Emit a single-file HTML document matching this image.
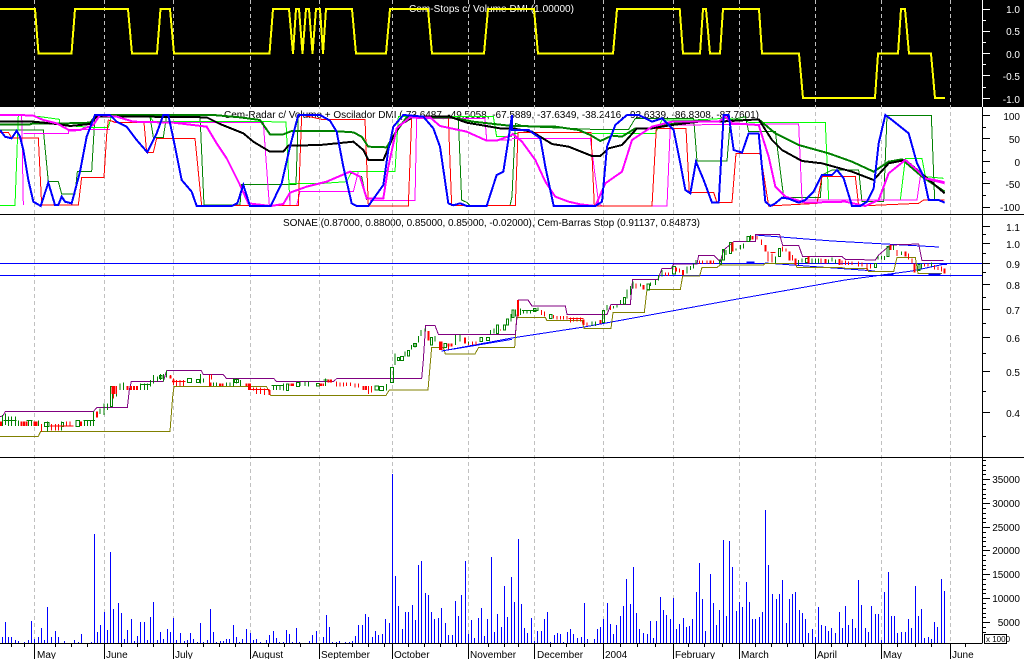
<!DOCTYPE html>
<html><head><meta charset="utf-8"><style>
html,body{margin:0;padding:0;background:#fff;overflow:hidden}
svg{display:block}
text{font-family:"Liberation Sans",sans-serif;font-size:10px}
.l{fill:none;stroke-linejoin:miter;shape-rendering:crispEdges}
</style></head><body>
<svg width="1024" height="659" viewBox="0 0 1024 659" xmlns="http://www.w3.org/2000/svg">
<rect width="1024" height="659" fill="#fff"/>
<rect width="1024" height="107" fill="#000"/>
<text x="409" y="12" fill="#fff" textLength="165" lengthAdjust="spacing">Cem-Stops c/ Volume DMI (1.00000)</text>
<text x="224" y="118" fill="#000" textLength="535" lengthAdjust="spacing">Cem-Radar c/ Volume + Oscilador DMI (-73.6487, -49.5058, -67.5889, -37.6349, -38.2416, -92.6339, -86.8308, -87.7601)</text>
<text x="283" y="226" fill="#000" textLength="417" lengthAdjust="spacing">SONAE (0.87000, 0.88000, 0.85000, 0.85000, -0.02000), Cem-Barras Stop (0.91137, 0.84873)</text>
<path class="l" stroke="#c0c0c0" stroke-dasharray="4 3" d="M34.5 0V643M104.5 0V643M173.5 0V643M250.5 0V643M319.5 0V643M392.5 0V643M468.5 0V643M534.5 0V643M603.5 0V643M673.5 0V643M739.5 0V643M815.5 0V643M881.5 0V643M950.5 0V643"/>
<path class="l" stroke="#000" d="M0 214.5H1024M0 457.5H1024"/>
<path class="l" stroke="#ffff00" stroke-width="2" d="M0 9H35L38.5 53.7H71.5L75 9H128L132 53.7H157L160.5 9H170L174 53.7H269.5L273 9H289L293 53.7L296 9H299L302.5 53.7L306 9H309L312.5 53.7L316 9H320L323 53.7L326 9H352L356 53.7H386L390 9H428L432 53.7H484L488 9H534L538 53.7H613L617 9H679.7L683 53.7H700L703 9H706L710 53.7H720L723 9H759L762 53.7H799L803 98H875L878 53.7H898L901 9H905L909 53.7H931L935 98H945"/>

<g transform="translate(0,0) scale(.33333)">
<g class="l" stroke-width="3">
<path stroke="#008000" d="M0 390H130L145 545H175L185 582H225L232 515H275L285 345H355L450 350L460 412H490L500 345H600L612 615H720L725 553H888L895 345M1050 520H1055L1085 530L1100 600M1375 355L1385 600L1400 607L1410 617H1530L1536 590"/>
<path stroke="#00ff00" d="M0 617H45L55 345L120 350L178 358V375L270 382H325L335 345L450 350L460 365H780H800L858 366L870 617M868 550H970L1040 545L1055 515H1185L1195 350H1480L1490 410H1536"/>
<path stroke="#ff00ff" d="M0 345H65L70 615M70 400H205V388H330M340 368H790L808 615M870 575V617H890L900 575H1060L1075 515M1110 601H1245L1250 355H1455L1460 420H1536"/>
<path stroke="#ff0000" d="M0 397H25L35 414H115L125 615H235L245 532H312L320 405L325 360L350 368H432L440 457H460L470 415H585L605 617H895L905 345L965 358H1095L1105 618H1225L1235 352H1345L1355 617H1536"/>
</g>
<g class="l" stroke-width="6">
<path stroke="#008000" d="M0 373H90L100 370H200L270 368L290 345H640L720 352L780 360L810 403H850L875 393H1000L1060 397L1085 410L1105 440L1160 442L1185 400L1220 352H1350L1420 365L1536 378"/>
<path stroke="#000" d="M0 365H100L170 372L210 378L270 372L290 350H440L620 352L660 372L730 400L760 425L810 455H850L865 437L960 435L1030 428L1060 425L1090 450L1105 480H1150L1175 420L1200 375L1240 350H1350L1400 368L1500 385H1536"/>
<path stroke="#ff00ff" d="M0 345H60L100 347L130 360L170 370L210 392L240 390L280 375L300 345L350 350L400 365L520 368L620 380L650 430L680 475L720 555L745 610L812 618L850 612L870 578L920 560L980 545L1050 515L1080 530L1100 595H1150L1165 500L1190 385L1230 352H1290L1320 378L1400 395L1460 422H1490L1536 405"/>
<path stroke="#0000ff" d="M0 390L15 410L35 415L50 392L60 410L70 450L85 540L100 605L122 618L145 548L165 615H175L185 590L195 605L215 610L240 515L260 410L285 345H330L350 365L380 380L410 420L442 457L470 400L490 345H505L525 440L545 540L575 575L590 618H695L712 610L730 555L750 618H812L845 550L870 440L895 345H960L990 362L1010 395L1030 500L1055 610L1070 618H1105L1150 555L1165 450L1180 380L1210 345L1270 350L1300 385L1320 440L1345 610L1360 616L1380 610L1400 618H1460L1490 525L1510 515L1525 420L1536 345"/>
</g>
</g>

<g transform="translate(512,0) scale(.33333)">
<g class="l" stroke-width="3">
<path stroke="#00ff00" d="M0 400H20M240 400H430L450 360H545L640 355L700 360L710 367H940L950 600H1165L1180 475H1230L1240 530L1295 535"/>
<path stroke="#008000" d="M0 590L10 370L40 380L240 388H350L370 355H545L555 483H645L655 360L700 350L710 395H790L815 592H925L930 525L960 510H1040L1050 605H1115L1125 346H1258L1268 600"/>
<path stroke="#ff00ff" d="M0 415H235L260 610L270 618H465L475 375L860 372L870 600H1215L1225 530L1298 545"/>
<path stroke="#ff0000" d="M0 617H10L18 398H237L247 618H420L433 385H522L532 577H605L615 608H660L672 460H745L770 618L915 610L930 530H1030L1040 618L1220 610L1235 600H1298"/>
</g>
<g class="l" stroke-width="6">
<path stroke="#008000" d="M0 378L130 380L200 390L235 405L265 423L300 407L330 410L370 385H420L480 372L560 362L620 365L740 358L790 400L860 435L950 460L1020 485L1085 515L1130 485L1170 478L1230 530L1298 575"/>
<path stroke="#000" d="M0 385L60 395L120 432L170 440L240 468H265L290 445L330 435L375 385H420L480 375L560 365H620L740 358L780 420L810 450L870 483L930 490L1020 515L1085 540L1130 490L1180 480L1240 530L1298 580"/>
<path stroke="#ff00ff" d="M0 400L30 425L70 480L100 545L130 590L170 605L205 613L250 618L280 550L330 515L360 420L420 380L480 365H620L640 350L660 370L740 375L770 470L790 560L820 590L880 608L1000 605L1060 618L1100 600L1130 520L1180 480L1215 510L1240 535L1298 550"/>
<path stroke="#0000ff" d="M0 345V390H50L85 415L100 500L125 618H250L270 605L285 440L310 375L345 345H380L420 365L450 355L485 390L505 490L520 570L535 580L552 485L575 540L600 608H620L635 345H650L665 450L690 458L710 400H740L760 605L775 618L790 610L810 593L830 596L860 608L880 600L905 575L930 525H960L975 510L995 535L1020 618H1045L1065 605L1085 565L1100 430L1120 345L1140 360L1190 400L1215 490L1235 530L1250 600H1280L1298 608"/>
</g>
</g>

<g class="l" stroke="#0000ff">
<path d="M0 263.5H982M0 275.5H982"/>
<path d="M442 351L512 338L584 327L732 300L845 280L912 271L945 264"/>
<path d="M755 235L832 241L939 247"/>
<path d="M765 263L875 271"/>
</g>

<g transform="translate(0,300) scale(.33333)" class="l">
<path stroke="#808000" stroke-width="3" d="M0 409H115L122 394H510L518 290L522 260H800L812 286H1158L1168 270H1284L1290 200L1295 142H1330L1336 162H1425L1436 142H1536"/>
<path stroke="#800080" stroke-width="3" d="M0 350L8 348L16 335H280L290 323H382L388 270L394 244H490L500 212H604L610 224H670L680 236H822L830 245H1000L1010 236H1265L1270 180L1277 76H1305L1315 103H1536"/>
<path stroke="#008000" stroke-width="3" d="M7 345V378M16 340V375M25 350V378M34 350V378M46 350V378M55 362V378M10 362H50M85 362V378M94 362V378M80 362H98M115 362V378M142 365V395M184 365V392M253 362V378M262 362V378M271 362V378M280 335V378M250 362H285M300 325V342M312 310V345M322 310V330M350 262V290M360 250V270M370 248V270M422 250V270M433 250V270M442 250V270M420 254H450M451 240V260M460 225V250M472 230V245M481 222V240M478 226H486V236H478ZM490 222V245M500 212V232M601 222V250M610 235V248M640 247V258M650 247V258M680 247V258M690 247V258M700 235V260M710 235V250M704 238H716V247H704ZM722 240V258M820 255V270M830 255V270M840 255V270M850 250V272M815 257H850M900 245V258M915 245V258M925 245V260M976 235V258M970 240H982M1160 252V272M1185 160V195M1215 155V170M1235 135V148M1245 130V142M1255 108V128M1263 90V108M1275 85V95M1305 108V125M1367 105V135M1380 103V125M1405 125V135M1472 90V103M1482 85V100M1533 42V65"/>
<path stroke="#008000" stroke-width="3" d="M133 367H147V380H133ZM184 367H190V380H184ZM228 362H238V379H228ZM331 260H337V320H331ZM563 236H575V248H563ZM590 238H598V248H590ZM860 252H866V272H860ZM890 248H898V260H890ZM950 250H958V258H950ZM1125 258H1135V270H1125ZM1138 260H1150V272H1138ZM1172 202H1180V248H1172ZM1192 172H1198V182H1192ZM1202 170H1210V182H1202ZM1222 152H1228V168H1222ZM1240 130H1250V140H1240ZM1292 112H1298V135H1292ZM1332 130H1340V143H1332ZM1440 112H1448V125H1440ZM1460 112H1468V122H1460ZM1490 75H1496V100H1490ZM1510 75H1516V90H1510ZM1520 57H1526V75H1520Z"/>
<path stroke="#ff0000" stroke-width="3" d="M124 372V395M154 372V392M166 372V392M175 372V392M150 378H220M200 365V378M210 365V378M340 258V295M350 258V282M511 225V236M520 236V255M530 240V258M540 240V258M550 240V258M516 245H556M628 225V260M634 224V238M660 250V258M745 250V270M760 262V272M770 262V282M782 262V282M793 265V285M750 268H808M870 250V258M880 250V258M960 250V258M970 250V258M985 238V248M995 240V248M1010 245V260M1020 248V260M1030 248V260M1040 248V258M1052 248V258M1065 250V262M1075 250V262M1105 258V282M1115 258V278M1345 130V150M1355 130V140M1405 130V135M1418 125V135M1428 125V135M1502 88V92"/>
<path stroke="#ff0000" stroke-width="6" d="M3 365V378M64 364V378M72 364V378M80 364V378M103 364V378M110 364V378M243 364V378M291 335V352M337 258V282M344 258V282M383 258V270M393 258V270M402 258V270M411 258V270M511 226V236M520 238V248M631 248V258M660 250V258M668 250V258M740 250V258M750 250V270M808 270V285M876 250V258M965 250V258M985 238V248M993 238V248M1090 258V270M1098 258V270M1285 93V122M1320 124V150M1325 124V150M1345 130V140M1355 130V140M1395 113V130"/>
<path stroke="#0000ff" stroke-width="3" d="M1325 153L1536 118"/>
</g>

<g transform="translate(512,220) scale(.33333)" class="l">
<path stroke="#808000" stroke-width="3" d="M0 382H8L14 292H100L105 302H210L216 325H297L303 277H397L405 208H505L512 168H563L570 142H615L625 135H755L760 130H850L855 143H990L1000 145H1065L1070 155H1145L1155 112H1210L1218 160H1290"/>
<path stroke="#800080" stroke-width="3" d="M0 343H10L20 240H48L60 258H160L165 283H285L297 253H355L362 178H438L450 145H478L485 132H555L560 106H605L625 125L635 90L665 65H730V44H803L812 76H860L872 110H990L1000 118L1090 120L1100 105L1135 75L1220 72L1230 122H1295"/>
<path stroke="#008000" stroke-width="3" d="M10 268V290M25 265V285M35 270V280M45 270V280M55 270V280M30 272H80M78 262V270M240 305V318M250 305V318M285 255V272M305 258V265M315 255V262M325 240V252M345 208V235M355 198V225M363 185V205M385 190V200M415 188V198M430 180V195M440 165V182M450 150V170M525 140V160M535 138V150M545 130V145M552 120V132M642 90V105M672 85V92M685 75V88M695 70V85M715 45V62M790 110V130M860 120V135M870 115V128M900 115V130M910 115V130M920 115V130M950 118V130M960 112V125M970 118V130M1098 108V118M1108 108V118M1118 108V120M1145 75V90M1168 95V105M1228 130V145M1258 127V140"/>
<path stroke="#008000" stroke-width="3" d="M0 270H6V292H0ZM65 265H72V275H65ZM112 283H120V295H112ZM272 272H278V308H272ZM335 232H340V252H335ZM405 192H412V210H405ZM482 140H490V162H482ZM622 120H628V132H622ZM632 88H638V120H632ZM652 68H658V100H652ZM705 50H712V65H705ZM800 85H806V110H800ZM880 115H888V128H880ZM1088 130H1094V142H1088ZM1125 80H1131V110H1125ZM1218 133H1224V152H1218Z"/>
<path stroke="#ff0000" stroke-width="3" d="M88 270V285M97 275V290M125 285V295M135 288V298M145 288V298M155 288V298M165 288V298M175 292V308M185 292V305M195 292V305M205 292V305M170 296H215M225 308V318M295 258V270M372 190V205M460 158V168M470 158V168M503 145V158M562 122V132M572 122V132M585 122V132M605 122V132M735 48V58M748 58V75M768 95V125M780 100V128M776 98H790M812 80V95M822 85V95M842 105V122M927 115V130M990 122V135M1000 122V135M1010 125V135M1020 125V135M1040 125V140M1050 128V140M1065 130V152M1075 132V145M1155 90V108M1190 100V118M1200 115V130M1238 130V140M1248 130V140M1268 135V148M1278 140V150M1288 140V155"/>
<path stroke="#ff0000" stroke-width="6" d="M18 240V290M215 298V315M265 300V310M395 195V208M492 142V155M513 150V165M595 122V132M662 68V95M722 48V58M760 75V95M832 95V122M850 115V135M890 110V130M940 117V130M982 117V135M1135 75V90M1180 95V110M1208 130V158M1298 145V160"/>
<path stroke="#0000ff" stroke-width="6" d="M703 128H727M1115 165H1145M1250 163H1285M1285 132H1305"/>
</g>

<g transform="translate(0,460) scale(.33333)" class="l">
<path stroke="#0000ff" stroke-width="3" d="M7 531V550M16 486V550M25 531V550M34 531V550M46 540V550M55 543V550M73 546V550M85 540V550M94 483V550M103 537V550M115 531V550M124 504V550M133 540V550M142 441V550M154 531V550M166 513V550M175 531V550M193 543V550M223 540V550M235 546V550M244 522V550M274 546V550M283 222V550M292 516V550M301 495V550M313 456V550M322 510V550M331 276V550M340 447V550M355 429V550M364 459V550M373 537V550M382 510V550M394 477V550M403 543V550M412 528V550M421 486V550M433 486V550M442 540V550M451 471V550M460 426V550M472 540V550M481 516V550M490 537V550M502 507V550M511 516V550M520 474V550M529 540V550M541 519V550M553 543V550M562 540V550M571 519V550M580 537V550M592 546V550M601 489V550M610 546V550M622 540V550M631 447V550M640 516V550M649 546V550M661 543V550M670 543V550M679 537V550M688 537V550M700 495V550M709 531V550M718 546V550M727 537V550M739 507V550M751 519V550M760 540V550M769 537V550M781 546V550M799 540V550M808 525V550M820 513V550M829 534V550M838 546V550M850 546V550M859 510V550M868 522V550M877 546V550M889 504V550M898 546V550M928 543V550M937 525V550M949 513V550M970 531V550M979 465V550M988 501V550M997 546V550M1009 546V550M1018 543V550M1036 546V550M1048 546V550M1057 543V550M1066 528V550M1075 495V550M1087 495V550M1096 462V550M1105 471V550M1117 531V550M1126 513V550M1135 525V550M1147 522V550M1156 477V550M1168 489V550M1177 42V550M1186 348V550M1195 438V550M1207 507V550M1216 456V550M1225 456V550M1237 435V550M1246 480V550M1255 315V550M1264 303V550M1276 399V550M1285 405V550M1294 456V550M1303 477V550M1315 474V550M1324 444V550M1336 489V550M1345 525V550M1357 525V550M1366 423V550M1375 468V550M1384 405V550M1396 303V550M1405 522V550M1414 480V550M1423 534V550M1435 474V550M1444 444V550M1453 528V550M1462 477V550M1474 291V550M1483 516V550M1492 462V550M1504 501V550M1513 378V550M1522 471V550M1534 351V550"/>
</g>
<g transform="translate(512,460) scale(.33333)" class="l">
<path stroke="#0000ff" stroke-width="3" d="M7 426V550M19 237V550M28 432V550M37 504V550M46 519V550M58 474V550M67 543V550M76 513V550M88 513V550M97 477V550M106 456V550M115 546V550M127 525V550M136 519V550M145 522V550M154 546V550M166 516V550M175 507V550M184 522V550M196 534V550M208 531V550M217 429V550M226 537V550M247 537V550M256 507V550M265 501V550M274 477V550M286 429V550M295 492V550M304 522V550M313 495V550M325 468V550M334 438V550M343 357V550M355 432V550M364 321V550M373 459V550M382 507V550M394 519V550M406 522V550M415 483V550M424 534V550M433 483V550M445 411V550M454 450V550M463 465V550M475 477V550M484 414V550M493 507V550M502 492V550M514 474V550M523 501V550M532 498V550M541 477V550M553 396V550M562 309V550M571 417V550M580 513V550M595 342V550M604 429V550M613 495V550M622 450V550M634 240V550M643 468V550M652 243V550M661 321V550M673 453V550M682 426V550M691 441V550M703 366V550M712 426V550M721 477V550M730 477V550M742 471V550M751 456V550M760 150V550M769 315V550M781 402V550M793 417V550M802 402V550M811 360V550M823 489V550M832 417V550M841 402V550M850 396V550M862 450V550M871 459V550M880 477V550M889 519V550M901 507V550M910 531V550M919 441V550M928 495V550M940 498V550M949 513V550M958 504V550M970 519V550M982 456V550M991 504V550M1000 438V550M1009 495V550M1021 477V550M1030 504V550M1039 360V550M1048 435V550M1060 504V550M1069 516V550M1078 438V550M1090 462V550M1099 462V550M1108 540V550M1117 396V550M1129 336V550M1138 468V550M1147 468V550M1156 519V550M1168 516V550M1180 516V550M1189 477V550M1198 504V550M1210 378V550M1219 468V550M1228 447V550M1237 534V550M1249 531V550M1258 537V550M1267 486V550M1276 501V550M1288 357V550M1297 393V550"/>
</g>

<path class="l" stroke="#000" d="M0 643.5H982.5M34.5 643V659M104.5 643V659M173.5 643V659M250.5 643V659M319.5 643V659M392.5 643V659M468.5 643V659M534.5 643V659M603.5 643V659M673.5 643V659M739.5 643V659M815.5 643V659M881.5 643V659M950.5 643V659M11.5 643V647M24.5 643V647M55.5 643V647M71.5 643V647M87.5 643V647M121.5 643V647M137.5 643V647M153.5 643V647M187.5 643V647M203.5 643V647M219.5 643V647M235.5 643V647M268.5 643V647M284.5 643V647M300.5 643V647M336.5 643V647M352.5 643V647M368.5 643V647M384.5 643V647M408.5 643V647M424.5 643V647M440.5 643V647M456.5 643V647M488.5 643V647M504.5 643V647M518.5 643V647M550.5 643V647M566.5 643V647M584.5 643V647M620.5 643V647M637.5 643V647M655.5 643V647M688.5 643V647M704.5 643V647M722.5 643V647M755.5 643V647M771.5 643V647M787.5 643V647M803.5 643V647M831.5 643V647M847.5 643V647M865.5 643V647M897.5 643V647M915.5 643V647M931.5 643V647M965.5 643V647"/>

<!-- axis -->
<path class="l" stroke="#fff" d="M982.5 0V107M982 9.5H990M982 31.5H990M982 53.5H990M982 75.5H990M982 98.5H990M982 20.5H986M982 42.5H986M982 64.5H986M982 87.5H986"/>
<path class="l" stroke="#000" d="M982.5 107V643M982 115.5H990M982 138.5H990M982 161.5H990M982 183.5H990M982 207.5H990M982 127.5H986M982 150.5H986M982 172.5H986M982 195.5H986M982 226.5H990M982 234.5H986M982 243.5H990M982 253.5H986M982 263.5H990M982 272.5H986M982 284.5H990M982 297.5H986M982 309.5H990M982 323.5H986M982 337.5H990M982 353.5H986M982 371.5H990M982 391.5H986M982 412.5H990M982 436.5H986M982 479.5H990M982 503.5H990M982 527.5H990M982 550.5H990M982 574.5H990M982 598.5H990M982 622.5H990M982 460.5H986M982 465.5H986M982 470.5H986M982 474.5H986M982 484.5H986M982 489.5H986M982 494.5H986M982 498.5H986M982 508.5H986M982 513.5H986M982 518.5H986M982 522.5H986M982 532.5H986M982 537.5H986M982 541.5H986M982 546.5H986M982 555.5H986M982 560.5H986M982 565.5H986M982 569.5H986M982 579.5H986M982 584.5H986M982 589.5H986M982 593.5H986M982 603.5H986M982 608.5H986M982 613.5H986M982 617.5H986M982 627.5H986M982 632.5H986"/>
<rect x="984.5" y="634.5" width="22" height="9" fill="#fff" stroke="#000" stroke-width="1" shape-rendering="crispEdges"/>
<text x="986" y="642" fill="#000" style="font-size:8px">x 1000</text>

<g fill="#fff" text-anchor="end">
<text x="1020" y="13">1.0</text><text x="1020" y="35">0.5</text><text x="1020" y="58">0.0</text><text x="1020" y="80">-0.5</text><text x="1020" y="103">-1.0</text>
</g>
<g fill="#000" text-anchor="end">
<text x="1020" y="120">100</text><text x="1020" y="143">50</text><text x="1020" y="166">0</text><text x="1020" y="188">-50</text><text x="1020" y="211">-100</text>
<text x="1020" y="231">1.1</text><text x="1020" y="248">1.0</text><text x="1020" y="268">0.9</text><text x="1020" y="289">0.8</text><text x="1020" y="314">0.7</text><text x="1020" y="342">0.6</text><text x="1020" y="376">0.5</text><text x="1020" y="417">0.4</text>
<text x="1020" y="483">35000</text><text x="1020" y="507">30000</text><text x="1020" y="531">25000</text><text x="1020" y="554">20000</text><text x="1020" y="578">15000</text><text x="1020" y="602">10000</text><text x="1020" y="626">5000</text>
</g>
<g fill="#000">
<text x="37" y="658">May</text><text x="106" y="658">June</text><text x="175" y="658">July</text><text x="252" y="658">August</text><text x="321" y="658">September</text><text x="394" y="658">October</text><text x="470" y="658">November</text><text x="537" y="658">December</text><text x="605" y="658">2004</text><text x="675" y="658">February</text><text x="741" y="658">March</text><text x="817" y="658">April</text><text x="883" y="658">May</text><text x="952" y="658">June</text>
</g>
</svg>
</body></html>
